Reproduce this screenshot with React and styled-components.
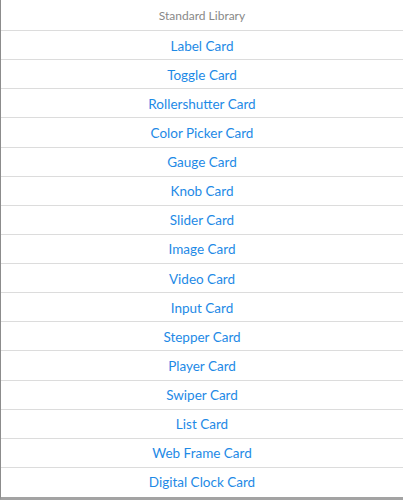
import React from "react";
import styled, { createGlobalStyle } from "styled-components";

const Global = createGlobalStyle`
  html, body { margin: 0; padding: 0; background: #ffffff; }
  body { font-family: Lato, "Noto Sans", sans-serif; }
`;

const Panel = styled.div`
  width: 403px;
  height: 500px;
  box-sizing: border-box;
  border-left: 1px solid #8c8c8c;
  border-bottom: 3px solid #a3a3a3;
  background: #fff;
  display: flex;
  flex-direction: column;
  overflow: hidden;
`;

const Header = styled.div`
  height: 30px;
  display: flex;
  align-items: center;
  justify-content: center;
  font-size: 12px;
  color: #888888;
  border-bottom: 1px solid #dcdcdc;
  flex-shrink: 0;
`;

const Item = styled.div`
  height: 27.13px;
  padding-top: 1px;
  display: flex;
  align-items: center;
  justify-content: center;
  font-size: 13.5px;
  color: #1e8ae6;
  border-bottom: ${(p) => (p.$last ? "none" : "1px solid #dcdcdc")};
  flex-shrink: 0;
  cursor: pointer;
`;

const items = [
  "Label Card",
  "Toggle Card",
  "Rollershutter Card",
  "Color Picker Card",
  "Gauge Card",
  "Knob Card",
  "Slider Card",
  "Image Card",
  "Video Card",
  "Input Card",
  "Stepper Card",
  "Player Card",
  "Swiper Card",
  "List Card",
  "Web Frame Card",
  "Digital Clock Card",
];

export default function App() {
  return (
    <>
      <Global />
      <Panel>
        <Header>Standard Library</Header>
        {items.map((t, i) => (
          <Item key={t} $last={i === items.length - 1}>
            {t}
          </Item>
        ))}
      </Panel>
    </>
  );
}
